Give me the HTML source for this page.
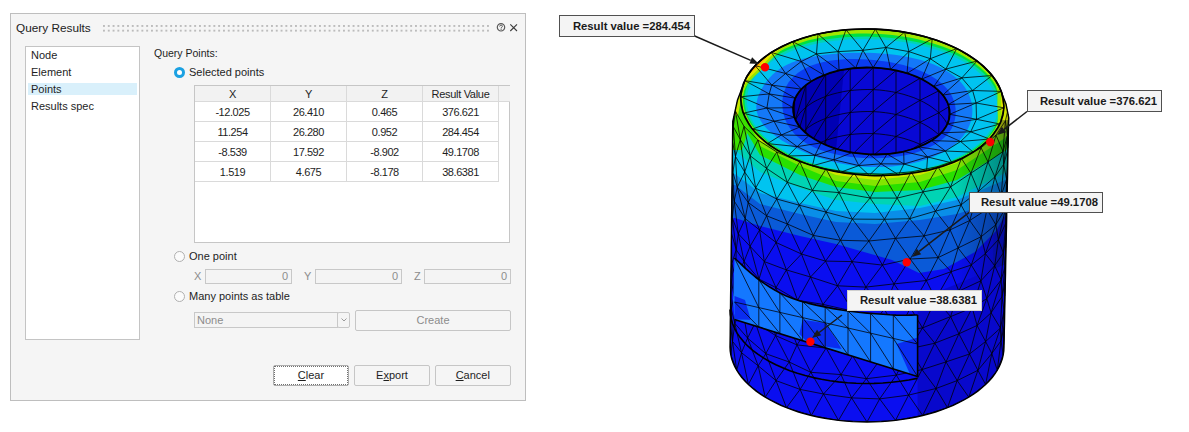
<!DOCTYPE html>
<html><head><meta charset="utf-8">
<style>
*{margin:0;padding:0;box-sizing:border-box}
html,body{width:1189px;height:432px;overflow:hidden;background:#fff;font-family:"Liberation Sans",sans-serif;color:#1e1e1e}
.a{position:absolute}
#dlg{left:10px;top:13px;width:516px;height:388px;background:#f5f5f5;border:1px solid #bebebe}
.t{position:absolute;white-space:nowrap;font-size:11px;line-height:13px}
#title{left:5px;top:7px;font-size:11.8px;line-height:15px;color:#222}
#grip{left:93px;top:11px;width:386px;height:7px;
 background-image:radial-gradient(circle,#8a8a8a 0.9px,transparent 1.1px);background-size:4.83px 4.7px}
#list{left:14px;top:32px;width:115px;height:294px;background:#fff;border:1px solid #c4c4c4}
#sel{left:2px;top:36px;width:109px;height:12px;background:#d9f0fb}
.rad{position:absolute;width:11px;height:11px;border-radius:50%;border:1px solid #b0b0b0;background:#fbfbfb}
.rad.on{border:3.3px solid #1ba1e2;background:#fff}
#tbl{left:183px;top:71px;width:316px;height:158px;background:#fff;border:1px solid #c6c6c6}
.hd{position:absolute;top:0;height:16px;background:#f2f2f2;border-right:1px solid #dadada;border-bottom:1px solid #dadada;text-align:center;font-size:11px;line-height:16px;letter-spacing:-0.3px}
.cell{position:absolute;height:20px;border-right:1px solid #dadada;border-bottom:1px solid #dadada;text-align:center;font-size:11px;line-height:20px;letter-spacing:-0.45px}
.inp{position:absolute;height:15px;border:1px solid #c8c8c8;background:#f4f4f4;color:#8c8c8c;font-size:11px;line-height:13px;text-align:right;padding-right:3px}
.lbl{color:#8c8c8c}
.btn{position:absolute;height:21px;border:1px solid #c6c6c6;border-radius:2px;background:#f5f5f5;text-align:center;font-size:11px;line-height:19px;color:#1e1e1e}
</style></head><body>
<div id="dlg" class="a">
  <div id="title" class="t">Query Results</div>
  <svg class="a" style="left:91.6px;top:11px" width="386" height="8"><defs><pattern id="gp" width="4.8" height="4.7" patternUnits="userSpaceOnUse"><rect x="0.3" y="0.3" width="1.3" height="1.3" fill="#7a7a7a"/></pattern></defs><rect width="386" height="8" fill="url(#gp)"/></svg>
  <svg class="a" style="left:484px;top:9px" width="26" height="12" viewBox="0 0 26 12">
    <circle cx="6" cy="4.3" r="3.7" fill="none" stroke="#5a5a5a" stroke-width="1.2"/>
    <path d="M4.6 3.5 Q4.8 2.1 6.1 2.1 Q7.5 2.2 7.4 3.4 Q7.3 4.2 6.2 4.8 L6.1 5.5" fill="none" stroke="#5a5a5a" stroke-width="1"/>
    <circle cx="6.1" cy="6.6" r="0.6" fill="#5a5a5a"/>
    <path d="M15.3 1.3 L22 8 M22 1.3 L15.3 8" stroke="#3c3c3c" stroke-width="1.1"/>
  </svg>
  <div id="list" class="a">
    <div id="sel" class="a"></div>
    <div class="t" style="left:5px;top:2px">Node</div>
    <div class="t" style="left:5px;top:19px">Element</div>
    <div class="t" style="left:5px;top:36px">Points</div>
    <div class="t" style="left:5px;top:53px">Results spec</div>
  </div>
  <div class="t" style="left:143px;top:33px;font-size:10.5px">Query Points:</div>
  <div class="rad on" style="left:163px;top:53px"></div>
  <div class="t" style="left:178px;top:52px">Selected points</div>
  <div id="tbl" class="a">
    <div class="hd" style="left:0;width:76px">X</div>
    <div class="hd" style="left:76px;width:76px">Y</div>
    <div class="hd" style="left:152px;width:76px">Z</div>
    <div class="hd" style="left:228px;width:76px">Result Value</div>
    <div class="hd" style="left:304px;width:11px;border-right:none"></div>
    <div class="cell" style="top:16px;left:0;width:76px">-12.025</div>
    <div class="cell" style="top:16px;left:76px;width:76px">26.410</div>
    <div class="cell" style="top:16px;left:152px;width:76px">0.465</div>
    <div class="cell" style="top:16px;left:228px;width:76px">376.621</div>
    <div class="cell" style="top:36px;left:0;width:76px">11.254</div>
    <div class="cell" style="top:36px;left:76px;width:76px">26.280</div>
    <div class="cell" style="top:36px;left:152px;width:76px">0.952</div>
    <div class="cell" style="top:36px;left:228px;width:76px">284.454</div>
    <div class="cell" style="top:56px;left:0;width:76px">-8.539</div>
    <div class="cell" style="top:56px;left:76px;width:76px">17.592</div>
    <div class="cell" style="top:56px;left:152px;width:76px">-8.902</div>
    <div class="cell" style="top:56px;left:228px;width:76px">49.1708</div>
    <div class="cell" style="top:76px;left:0;width:76px">1.519</div>
    <div class="cell" style="top:76px;left:76px;width:76px">4.675</div>
    <div class="cell" style="top:76px;left:152px;width:76px">-8.178</div>
    <div class="cell" style="top:76px;left:228px;width:76px">38.6381</div>
  </div>
  <div class="rad" style="left:163px;top:237px"></div>
  <div class="t" style="left:178px;top:236px">One point</div>
  <div class="t lbl" style="left:183px;top:256px">X</div>
  <div class="inp" style="left:194px;top:255px;width:87px">0</div>
  <div class="t lbl" style="left:293px;top:256px">Y</div>
  <div class="inp" style="left:304px;top:255px;width:87px">0</div>
  <div class="t lbl" style="left:403px;top:256px">Z</div>
  <div class="inp" style="left:413px;top:255px;width:87px">0</div>
  <div class="rad" style="left:163px;top:277px"></div>
  <div class="t" style="left:178px;top:276px">Many points as table</div>
  <div class="inp" style="left:183px;top:298px;width:144px;height:16px;text-align:left;padding-left:2px;line-height:14px">None</div>
  <div class="a" style="left:326px;top:298px;width:13px;height:16px;border:1px solid #c8c8c8;border-radius:2px;background:#f4f4f4"></div>
  <svg class="a" style="left:329px;top:303px" width="8" height="6"><path d="M1.5 1.5 L4 4 L6.5 1.5" fill="none" stroke="#9a9a9a" stroke-width="1"/></svg>
  <div class="btn" style="left:344px;top:296px;width:156px;color:#8c8c8c">Create</div>
  <div class="btn" style="left:262px;top:351px;width:76px;border:1px solid #adadad;background:#fff"><div style="position:absolute;left:0;top:0;right:0;bottom:0;border:1px dotted #707070"></div><u>C</u>lear</div>
  <div class="btn" style="left:343px;top:351px;width:76px">E<u>x</u>port</div>
  <div class="btn" style="left:423.5px;top:351px;width:76.5px"><u>C</u>ancel</div>
</div>
<!--FEA--><svg class="a" style="left:0;top:0" width="1189" height="432" viewBox="0 0 1189 432"><defs><clipPath id="bc"><polygon points="746.0,78.0 737.5,100.0 732.8,121.3 732.6,133.8 732.5,146.4 732.3,158.9 732.1,171.4 732.0,184.0 731.8,196.5 731.7,209.1 731.5,221.6 731.4,234.1 731.2,246.7 731.1,259.2 730.9,271.8 730.8,284.3 730.6,296.8 730.5,309.4 730.3,321.9 730.2,334.5 730.0,347.0 730.0,347.0 730.2,350.9 730.8,354.8 731.7,358.7 733.0,362.6 734.7,366.4 736.7,370.2 739.1,373.9 741.8,377.5 744.9,381.0 748.4,384.5 752.1,387.8 756.2,391.1 760.5,394.2 765.2,397.2 770.1,400.0 775.3,402.7 780.8,405.3 786.5,407.7 792.4,409.9 798.5,412.0 804.8,413.8 811.3,415.5 817.9,417.0 824.7,418.3 831.5,419.4 838.5,420.4 845.6,421.1 852.7,421.6 859.8,421.9 867.0,422.0 874.2,421.9 881.3,421.6 888.4,421.1 895.5,420.4 902.5,419.4 909.3,418.3 916.1,417.0 922.7,415.5 929.2,413.8 935.5,412.0 941.6,409.9 947.5,407.7 953.2,405.3 958.7,402.7 963.9,400.0 968.8,397.2 973.5,394.2 977.8,391.1 981.9,387.8 985.6,384.5 989.1,381.0 992.2,377.5 994.9,373.9 997.3,370.2 999.3,366.4 1001.0,362.6 1002.3,358.7 1003.2,354.8 1003.8,350.9 1004.0,347.0 1004.0,347.0 1004.2,334.9 1004.5,322.9 1004.7,310.8 1005.0,298.8 1005.2,286.7 1005.5,274.6 1005.7,262.6 1006.0,250.5 1006.2,238.5 1006.5,226.4 1006.7,214.3 1007.0,202.3 1007.2,190.2 1007.5,178.2 1007.7,166.1 1007.9,154.0 1008.2,142.0 1008.4,129.9 1008.8,118.0 1006.0,104.0 1002.4,95.0 1001.4,91.7 1000.1,88.5 998.6,85.3 996.8,82.1 994.7,78.9 992.4,75.8 989.8,72.7 987.0,69.7 984.0,66.8 980.8,64.0 977.3,61.2 973.6,58.5 969.7,55.9 965.6,53.4 961.4,50.9 956.9,48.6 952.3,46.4 947.5,44.4 942.5,42.4 937.4,40.5 932.2,38.8 926.9,37.2 921.4,35.8 915.9,34.4 910.2,33.3 904.5,32.2 898.7,31.3 892.9,30.6 887.0,29.9 881.1,29.5 875.2,29.2 869.2,29.0 863.3,29.0 857.4,29.1 851.5,29.4 845.7,29.8 839.9,30.4 834.2,31.1 828.5,32.0 823.0,33.0 817.5,34.1 812.2,35.4 807.0,36.8 801.9,38.4 797.0,40.1 792.2,41.9 787.6,43.8 783.1,45.9 778.8,48.0 774.7,50.3 770.9,52.7 767.2,55.2 763.7,57.8 760.5,60.4 757.5,63.2 754.7,66.0 752.1,68.9 749.8,71.9 747.8,74.9 746.0,78.0"/></clipPath><clipPath id="hc"><ellipse cx="871.4" cy="111" rx="78.4" ry="43.4" transform="rotate(2.4 871.4 111)"/></clipPath></defs><polygon points="746.0,78.0 737.5,100.0 732.8,121.3 732.6,133.8 732.5,146.4 732.3,158.9 732.1,171.4 732.0,184.0 731.8,196.5 731.7,209.1 731.5,221.6 731.4,234.1 731.2,246.7 731.1,259.2 730.9,271.8 730.8,284.3 730.6,296.8 730.5,309.4 730.3,321.9 730.2,334.5 730.0,347.0 730.0,347.0 730.2,350.9 730.8,354.8 731.7,358.7 733.0,362.6 734.7,366.4 736.7,370.2 739.1,373.9 741.8,377.5 744.9,381.0 748.4,384.5 752.1,387.8 756.2,391.1 760.5,394.2 765.2,397.2 770.1,400.0 775.3,402.7 780.8,405.3 786.5,407.7 792.4,409.9 798.5,412.0 804.8,413.8 811.3,415.5 817.9,417.0 824.7,418.3 831.5,419.4 838.5,420.4 845.6,421.1 852.7,421.6 859.8,421.9 867.0,422.0 874.2,421.9 881.3,421.6 888.4,421.1 895.5,420.4 902.5,419.4 909.3,418.3 916.1,417.0 922.7,415.5 929.2,413.8 935.5,412.0 941.6,409.9 947.5,407.7 953.2,405.3 958.7,402.7 963.9,400.0 968.8,397.2 973.5,394.2 977.8,391.1 981.9,387.8 985.6,384.5 989.1,381.0 992.2,377.5 994.9,373.9 997.3,370.2 999.3,366.4 1001.0,362.6 1002.3,358.7 1003.2,354.8 1003.8,350.9 1004.0,347.0 1004.0,347.0 1004.2,334.9 1004.5,322.9 1004.7,310.8 1005.0,298.8 1005.2,286.7 1005.5,274.6 1005.7,262.6 1006.0,250.5 1006.2,238.5 1006.5,226.4 1006.7,214.3 1007.0,202.3 1007.2,190.2 1007.5,178.2 1007.7,166.1 1007.9,154.0 1008.2,142.0 1008.4,129.9 1008.8,118.0 1006.0,104.0 1002.4,95.0 1001.4,91.7 1000.1,88.5 998.6,85.3 996.8,82.1 994.7,78.9 992.4,75.8 989.8,72.7 987.0,69.7 984.0,66.8 980.8,64.0 977.3,61.2 973.6,58.5 969.7,55.9 965.6,53.4 961.4,50.9 956.9,48.6 952.3,46.4 947.5,44.4 942.5,42.4 937.4,40.5 932.2,38.8 926.9,37.2 921.4,35.8 915.9,34.4 910.2,33.3 904.5,32.2 898.7,31.3 892.9,30.6 887.0,29.9 881.1,29.5 875.2,29.2 869.2,29.0 863.3,29.0 857.4,29.1 851.5,29.4 845.7,29.8 839.9,30.4 834.2,31.1 828.5,32.0 823.0,33.0 817.5,34.1 812.2,35.4 807.0,36.8 801.9,38.4 797.0,40.1 792.2,41.9 787.6,43.8 783.1,45.9 778.8,48.0 774.7,50.3 770.9,52.7 767.2,55.2 763.7,57.8 760.5,60.4 757.5,63.2 754.7,66.0 752.1,68.9 749.8,71.9 747.8,74.9 746.0,78.0" fill="#0a0ef0"/><g clip-path="url(#bc)"><polygon points="995.0,150.0 1040.0,150.0 1040.0,432.0 990.0,432.0" fill="#0812d8" /><polygon points="700.0,0.0 700.0,218.0 735.0,218.0 760.0,226.0 800.0,236.0 836.0,244.0 850.0,248.0 892.0,260.0 919.0,273.0 944.0,269.0 975.0,252.0 996.0,231.0 1004.0,217.0 1010.0,212.0 1040.0,212.0 1040.0,0.0" fill="#0a5ad8"/><polygon points="700.0,0.0 700.0,185.0 735.0,185.0 760.0,204.0 800.0,214.0 836.0,222.0 875.0,224.0 920.0,220.0 957.0,214.0 1005.0,199.0 1010.0,196.0 1040.0,196.0 1040.0,0.0" fill="#0a8ee8"/><polygon points="700.0,0.0 700.0,174.0 735.0,174.0 760.0,193.0 800.0,203.0 836.0,211.0 875.0,213.0 920.0,208.0 957.0,200.0 1005.0,180.0 1010.0,176.0 1040.0,176.0 1040.0,0.0" fill="#00c4f0"/><polygon points="700.0,0.0 700.0,150.0 735.0,150.0 760.0,172.0 800.0,188.0 836.0,200.0 875.0,204.0 920.0,206.0 957.0,197.0 1005.0,173.0 1010.0,168.0 1040.0,168.0 1040.0,0.0" fill="#00d4b4"/><polygon points="700.0,0.0 700.0,112.0 735.0,112.0 760.0,155.0 800.0,175.0 836.0,187.0 875.0,192.0 920.0,190.0 957.0,180.0 1005.0,151.0 1010.0,146.0 1040.0,146.0 1040.0,0.0" fill="#28e000"/><polygon points="700.0,0.0 700.0,96.0 735.0,96.0 760.0,146.0 800.0,166.0 836.0,181.0 875.0,186.0 920.0,182.0 957.0,170.0 1005.0,138.0 1010.0,132.0 1040.0,132.0 1040.0,0.0" fill="#82e600"/><polygon points="700.0,0.0 700.0,80.0 735.0,80.0 760.0,141.0 800.0,160.0 836.0,175.0 875.0,180.0 920.0,175.0 957.0,163.0 1005.0,128.0 1010.0,120.0 1040.0,120.0 1040.0,0.0" fill="#d2e600"/><defs><linearGradient id="rs" x1="0" x2="1" y1="0" y2="0"><stop offset="0" stop-color="#000028" stop-opacity="0"/><stop offset="1" stop-color="#000028" stop-opacity="0.4"/></linearGradient></defs><rect x="955" y="120" width="56" height="320" fill="url(#rs)"/><polygon points="725.0,85.0 748.0,80.0 744.0,108.0 750.0,125.0 742.0,150.0 725.0,150.0" fill="#3ce000" /><polygon points="725.0,85.0 748.0,80.0 741.0,100.0 738.0,115.0 725.0,118.0" fill="#c8e600" /><polygon points="917.6,300.0 1040.0,250.0 1040.0,432.0 917.6,432.0" fill="#0808cc" /><polygon points="734.5,258.0 737.2,260.5 741.0,264.1 745.4,268.3 750.3,272.7 755.4,277.0 760.4,280.8 765.2,284.1 770.1,287.3 775.2,290.4 780.6,293.3 786.4,296.1 792.8,298.6 800.0,300.9 807.8,303.1 816.1,305.1 824.7,306.9 833.2,308.6 841.5,310.0 849.8,311.2 858.5,312.3 867.1,313.1 875.4,313.8 883.1,314.3 890.0,314.8 896.1,315.1 901.8,315.2 906.8,315.2 911.2,315.1 914.8,315.0 917.6,315.0 917.6,376.5 734.5,319.5 733.0,300.0" fill="#1478ff" /><polygon points="802.6,319.7 825.0,323.0 835.0,337.5 841.5,349.0 809.0,344.0 799.3,334.0" fill="#0a2cf0" /><polygon points="896.6,344.0 917.6,337.5 917.6,376.0 909.5,373.0" fill="#0a2cf0" /><polygon points="734.5,296.0 745.0,300.0 750.7,319.7 734.5,319.5" fill="#0a2cf0" /></g><ellipse cx="872.3" cy="102.3" rx="131.7" ry="73.2" fill="#a0e600" transform="rotate(2.4 872.3 102.3)"/><polygon points="869.2,174.6 878.3,174.8 887.3,174.6 896.2,174.1 905.0,173.3 913.7,172.1 922.2,170.6 930.4,168.7 938.3,166.5 945.9,164.0 953.2,161.2 960.0,158.2 966.4,154.8 972.4,151.2 977.9,147.4 982.9,143.3 987.3,139.1 991.1,134.6 994.4,130.0 997.1,125.3 999.2,120.5 1000.6,115.6 1001.4,110.6 1001.5,105.6 1001.1,100.6 999.9,95.6 998.2,90.6 995.8,85.7 992.8,81.0 989.2,76.3 985.0,71.8 980.2,67.5 974.9,63.3 969.2,59.4 962.9,55.7 956.3,52.3 949.2,49.1 941.8,46.3 934.1,43.7 926.2,41.4 918.0,39.3 909.6,37.6 901.1,36.2 892.5,35.1 883.8,34.3 875.1,33.8 866.4,33.6 857.6,33.6 849.0,34.0 840.4,34.7 831.9,35.7 823.6,37.1 815.5,38.7 807.6,40.6 800.0,42.9 792.7,45.4 785.8,48.3 779.3,51.4 773.2,54.9 767.6,58.5 762.5,62.5 758.0,66.6 754.0,70.9 750.6,75.5 747.8,80.1 745.6,84.9 744.1,89.8 743.2,94.8 742.9,99.8 743.3,104.8 744.3,109.8 746.0,114.8 748.3,119.7 751.1,124.6 754.6,129.3 758.7,133.9 763.3,138.4 768.4,142.7 774.0,146.8 780.2,150.6 786.7,154.3 793.7,157.7 801.1,160.8 808.8,163.6 816.9,166.2 825.2,168.4 833.7,170.3 842.4,171.9 851.3,173.1 860.2,174.0" fill="#00e040" /><polygon points="869.3,174.0 878.2,174.2 887.1,174.0 895.9,173.5 904.6,172.7 913.2,171.5 921.5,170.0 929.6,168.2 937.5,166.0 945.0,163.5 952.1,160.8 958.9,157.7 965.3,154.4 971.1,150.9 976.6,147.1 981.5,143.1 985.8,138.9 989.6,134.5 992.9,130.0 995.5,125.3 997.5,120.5 998.9,115.7 999.7,110.8 999.8,105.8 999.3,100.9 998.1,96.0 996.3,91.1 993.9,86.3 990.9,81.6 987.2,77.1 983.0,72.7 978.2,68.5 972.9,64.5 967.1,60.7 960.9,57.2 954.2,54.0 947.2,51.0 939.9,48.3 932.3,45.9 924.5,43.8 916.5,42.0 908.4,40.4 900.1,39.1 891.8,38.1 883.4,37.3 874.9,36.9 866.5,36.6 858.1,36.7 849.7,37.0 841.3,37.6 833.1,38.5 825.0,39.6 817.0,41.1 809.3,42.8 801.8,44.9 794.6,47.3 787.7,50.0 781.2,53.0 775.1,56.2 769.5,59.7 764.4,63.5 759.8,67.5 755.8,71.8 752.4,76.2 749.5,80.8 747.4,85.5 745.8,90.3 744.9,95.1 744.6,100.1 744.9,105.0 745.9,110.0 747.5,114.9 749.8,119.8 752.6,124.6 756.0,129.2 760.0,133.8 764.6,138.2 769.7,142.4 775.2,146.5 781.3,150.3 787.8,153.9 794.7,157.2 802.0,160.3 809.6,163.1 817.5,165.6 825.7,167.8 834.1,169.7 842.7,171.3 851.5,172.5 860.3,173.4" fill="#00d4b4" /><polygon points="869.3,173.1 878.1,173.3 886.8,173.2 895.5,172.7 904.0,171.9 912.5,170.7 920.7,169.2 928.6,167.4 936.3,165.3 943.7,162.9 950.8,160.2 957.4,157.2 963.7,153.9 969.4,150.4 974.8,146.7 979.6,142.7 983.8,138.6 987.6,134.3 990.7,129.8 993.3,125.3 995.2,120.6 996.5,115.8 997.3,111.0 997.3,106.2 996.8,101.3 995.6,96.5 993.7,91.8 991.3,87.1 988.2,82.6 984.6,78.1 980.4,73.9 975.6,69.8 970.4,65.9 964.7,62.3 958.6,58.9 952.1,55.8 945.2,52.9 938.1,50.3 930.7,48.0 923.1,45.9 915.3,44.1 907.4,42.6 899.3,41.4 891.2,40.4 883.0,39.6 874.8,39.2 866.6,39.0 858.4,39.0 850.2,39.3 842.1,39.9 834.1,40.7 826.2,41.9 818.4,43.3 810.9,45.0 803.5,47.0 796.5,49.3 789.8,51.8 783.4,54.7 777.4,57.9 771.9,61.3 766.8,64.9 762.3,68.8 758.3,72.9 754.9,77.2 752.0,81.6 749.8,86.2 748.2,90.9 747.3,95.7 746.9,100.5 747.2,105.4 748.2,110.2 749.7,115.1 751.9,119.8 754.6,124.5 758.0,129.1 761.9,133.6 766.4,137.9 771.4,142.1 776.8,146.1 782.8,149.8 789.2,153.4 795.9,156.7 803.1,159.7 810.6,162.5 818.4,164.9 826.4,167.1 834.7,169.0 843.2,170.5 851.8,171.7 860.5,172.6" fill="#00c4f0" /><polygon points="869.4,167.0 877.1,167.1 884.7,167.0 892.3,166.4 899.7,165.6 906.8,164.4 913.8,163.0 920.5,161.3 926.8,159.3 932.8,157.0 938.4,154.5 943.6,151.9 948.4,149.0 952.8,145.9 956.7,142.7 960.2,139.4 963.2,135.9 965.8,132.3 967.9,128.7 969.6,125.0 970.9,121.2 971.8,117.4 972.3,113.5 972.4,109.6 972.1,105.7 971.4,101.8 970.2,97.9 968.7,94.0 966.6,90.1 964.1,86.3 961.1,82.6 957.6,79.1 953.6,75.7 949.1,72.5 944.2,69.5 938.9,66.8 933.2,64.3 927.2,62.1 921.0,60.1 914.6,58.4 908.0,57.0 901.3,55.8 894.6,54.8 887.8,54.0 880.9,53.4 874.0,53.0 867.1,52.8 860.3,52.7 853.4,52.8 846.5,53.0 839.6,53.4 832.6,54.0 825.7,54.7 818.9,55.7 812.0,56.8 805.3,58.3 798.9,60.1 792.7,62.2 787.0,64.7 781.8,67.6 777.1,70.8 773.0,74.3 769.4,78.0 766.3,81.8 763.5,85.8 761.2,89.8 759.2,93.9 757.6,98.1 756.6,102.4 756.3,106.7 756.7,111.2 758.0,115.7 760.2,120.1 763.1,124.5 766.9,128.7 771.3,132.7 776.2,136.6 781.5,140.2 787.2,143.6 793.0,146.8 799.1,149.7 805.3,152.5 811.7,155.1 818.2,157.4 825.0,159.6 832.0,161.5 839.2,163.2 846.6,164.6 854.1,165.7 861.7,166.5" fill="#1478f8" /><polygon points="869.5,158.3 875.7,158.3 881.8,158.1 887.8,157.7 893.7,157.1 899.6,156.3 905.3,155.3 910.8,154.0 916.1,152.5 921.2,150.8 926.0,148.9 930.6,146.8 934.8,144.5 938.7,142.1 942.1,139.5 945.2,136.7 947.8,133.9 950.1,130.9 951.9,127.9 953.3,124.8 954.4,121.6 955.1,118.4 955.6,115.2 955.7,111.9 955.6,108.7 955.1,105.3 954.3,102.0 953.1,98.7 951.6,95.4 949.6,92.1 947.2,89.0 944.4,85.9 941.1,82.9 937.5,80.1 933.5,77.4 929.2,74.9 924.5,72.6 919.6,70.4 914.4,68.4 909.0,66.7 903.4,65.1 897.7,63.7 891.8,62.5 885.9,61.5 879.8,60.7 873.6,60.0 867.4,59.5 861.1,59.2 854.8,59.0 848.5,59.1 842.1,59.4 835.8,59.9 829.6,60.8 823.5,61.9 817.7,63.4 812.2,65.2 807.0,67.4 802.3,69.9 798.1,72.7 794.5,75.7 791.3,78.9 788.7,82.3 786.6,85.8 785.0,89.4 783.7,93.0 782.9,96.6 782.4,100.2 782.3,103.7 782.5,107.2 782.9,110.7 783.6,114.2 784.6,117.6 785.9,120.9 787.5,124.3 789.5,127.6 791.9,130.8 794.6,134.0 797.9,137.1 801.6,140.1 805.8,142.9 810.4,145.5 815.5,147.9 820.9,150.1 826.6,152.0 832.5,153.6 838.6,155.0 844.7,156.1 850.9,157.0 857.1,157.6 863.3,158.1" fill="#0a3cf0" /><polygon points="799.3,39.2 795.4,40.6 791.6,42.1 787.9,43.6 784.3,45.3 780.9,47.0 777.5,48.7 774.3,50.6 771.2,52.5 768.2,54.5 765.3,56.5 762.6,58.6 760.1,60.8 757.7,63.0 755.4,65.2 753.3,67.6 751.4,69.9 749.6,72.3 747.9,74.7 746.4,77.2 745.1,79.7 744.0,82.3 743.0,84.8 742.2,87.4 741.6,90.0 741.1,92.6 740.8,95.2 740.7,97.9 740.7,100.5 740.9,103.2 742.6,103.4 742.5,100.8 742.6,98.3 742.8,95.7 743.4,93.2 744.1,90.7 745.2,88.2 746.4,85.9 747.9,83.6 749.7,81.3 751.6,79.2 753.7,77.0 755.8,75.0 758.0,72.9 760.2,70.9 762.4,68.8 764.5,66.7 766.6,64.5 768.6,62.3 770.7,60.0 772.9,57.7 775.2,55.5 777.7,53.2 780.4,51.1 783.2,49.0 786.3,47.1 789.5,45.2 793.0,43.5 796.6,41.9 800.4,40.5" fill="#96e600" /><polygon points="786.5,44.3 784.0,45.4 781.5,46.7 779.0,47.9 776.7,49.2 774.4,50.5 772.1,51.9 769.9,53.3 767.8,54.7 765.8,56.2 763.8,57.7 761.9,59.2 760.1,60.7 758.4,62.3 756.7,63.9 755.1,65.5 753.6,67.2 752.2,68.9 750.8,70.6 749.6,72.3 748.4,74.0 747.3,75.8 746.2,77.6 745.3,79.4 744.5,81.2 743.7,83.0 743.0,84.9 742.4,86.7 741.9,88.6 741.5,90.4 742.7,90.7 743.2,88.9 743.8,87.1 744.5,85.3 745.4,83.6 746.4,81.9 747.5,80.2 748.8,78.5 750.2,77.0 751.7,75.4 753.3,73.9 754.9,72.4 756.5,70.9 758.1,69.4 759.7,67.9 761.3,66.4 762.8,64.8 764.3,63.2 765.8,61.5 767.3,59.9 768.9,58.2 770.5,56.5 772.2,54.9 774.1,53.3 776.0,51.8 778.1,50.3 780.2,48.9 782.5,47.5 784.9,46.3 787.3,45.0" fill="#e6e600" /><polygon points="773.5,51.1 772.0,52.0 770.6,52.9 769.2,53.8 767.8,54.7 766.5,55.7 765.2,56.6 763.9,57.6 762.7,58.6 761.5,59.6 760.3,60.6 759.1,61.6 758.0,62.6 756.9,63.7 755.9,64.8 754.9,65.8 753.9,66.9 752.9,68.0 752.0,69.1 751.1,70.2 750.3,71.3 749.5,72.4 748.7,73.6 747.9,74.7 747.2,75.8 746.6,77.0 745.9,78.2 745.3,79.3 744.8,80.5 744.2,81.7 744.3,81.7 744.9,80.6 745.5,79.4 746.2,78.3 746.9,77.1 747.7,76.0 748.6,75.0 749.5,73.9 750.5,72.9 751.6,71.9 752.7,70.9 753.8,69.9 754.9,68.9 756.0,67.9 757.1,67.0 758.2,65.9 759.2,64.9 760.2,63.9 761.2,62.8 762.2,61.7 763.1,60.6 764.1,59.4 765.1,58.3 766.1,57.2 767.2,56.2 768.4,55.1 769.6,54.1 770.9,53.1 772.2,52.1 773.6,51.2" fill="#ff9600" /><polygon points="994.9,132.5 996.2,130.7 997.3,128.8 998.4,127.0 999.4,125.1 1000.2,123.2 1001.0,121.3 1001.7,119.4 1002.3,117.4 1002.8,115.5 1003.2,113.5 1003.6,111.5 1003.8,109.6 1003.9,107.6 1003.9,105.6 1003.8,103.6 1003.7,101.6 1003.4,99.7 1003.0,97.7 1002.6,95.7 1002.0,93.7 1001.4,91.7 1000.6,89.8 999.8,87.8 998.9,85.9 997.9,84.0 996.7,82.0 995.5,80.1 994.2,78.3 992.9,76.4 991.5,76.9 992.8,78.8 993.8,80.7 994.8,82.7 995.6,84.7 996.2,86.7 996.7,88.7 997.1,90.7 997.3,92.7 997.4,94.8 997.5,96.8 997.5,98.8 997.4,100.7 997.4,102.7 997.4,104.6 997.4,106.5 997.5,108.4 997.6,110.2 997.7,112.1 997.8,113.9 997.9,115.8 997.9,117.6 997.8,119.5 997.6,121.3 997.3,123.2 996.8,125.1 996.2,126.9 995.5,128.8 994.5,130.6 993.5,132.4" fill="#96e600" /><polygon points="1000.4,122.9 1000.9,121.7 1001.3,120.5 1001.7,119.3 1002.1,118.1 1002.5,116.9 1002.8,115.7 1003.1,114.5 1003.3,113.3 1003.5,112.0 1003.6,110.8 1003.8,109.6 1003.9,108.3 1003.9,107.1 1003.9,105.9 1003.9,104.6 1003.8,103.4 1003.7,102.2 1003.6,100.9 1003.4,99.7 1003.2,98.5 1003.0,97.2 1002.7,96.0 1002.3,94.8 1002.0,93.5 1001.6,92.3 1001.2,91.1 1000.7,89.9 1000.2,88.7 999.6,87.4 999.3,87.5 999.7,88.8 1000.1,90.0 1000.4,91.3 1000.6,92.5 1000.8,93.8 1001.0,95.1 1001.1,96.3 1001.1,97.6 1001.2,98.9 1001.2,100.1 1001.2,101.3 1001.2,102.6 1001.2,103.8 1001.2,105.0 1001.2,106.2 1001.3,107.4 1001.3,108.6 1001.4,109.8 1001.4,111.0 1001.5,112.2 1001.5,113.4 1001.5,114.6 1001.4,115.8 1001.3,117.0 1001.2,118.2 1001.0,119.3 1000.7,120.5 1000.4,121.7 1000.0,122.9" fill="#e6e600" /><ellipse cx="871.4" cy="111" rx="78.4" ry="43.4" fill="#0808d4" transform="rotate(2.4 871.4 111)"/><g clip-path="url(#hc)"><polygon points="790,60 845,60 835,160 790,160" fill="#0000b4"/></g><defs><clipPath id="bc2"><path clip-rule="evenodd" d="M746.0 78.0 L737.5 100.0 L732.8 121.3 L732.6 133.8 L732.5 146.4 L732.3 158.9 L732.1 171.4 L732.0 184.0 L731.8 196.5 L731.7 209.1 L731.5 221.6 L731.4 234.1 L731.2 246.7 L731.1 259.2 L730.9 271.8 L730.8 284.3 L730.6 296.8 L730.5 309.4 L730.3 321.9 L730.2 334.5 L730.0 347.0 L730.0 347.0 L730.2 350.9 L730.8 354.8 L731.7 358.7 L733.0 362.6 L734.7 366.4 L736.7 370.2 L739.1 373.9 L741.8 377.5 L744.9 381.0 L748.4 384.5 L752.1 387.8 L756.2 391.1 L760.5 394.2 L765.2 397.2 L770.1 400.0 L775.3 402.7 L780.8 405.3 L786.5 407.7 L792.4 409.9 L798.5 412.0 L804.8 413.8 L811.3 415.5 L817.9 417.0 L824.7 418.3 L831.5 419.4 L838.5 420.4 L845.6 421.1 L852.7 421.6 L859.8 421.9 L867.0 422.0 L874.2 421.9 L881.3 421.6 L888.4 421.1 L895.5 420.4 L902.5 419.4 L909.3 418.3 L916.1 417.0 L922.7 415.5 L929.2 413.8 L935.5 412.0 L941.6 409.9 L947.5 407.7 L953.2 405.3 L958.7 402.7 L963.9 400.0 L968.8 397.2 L973.5 394.2 L977.8 391.1 L981.9 387.8 L985.6 384.5 L989.1 381.0 L992.2 377.5 L994.9 373.9 L997.3 370.2 L999.3 366.4 L1001.0 362.6 L1002.3 358.7 L1003.2 354.8 L1003.8 350.9 L1004.0 347.0 L1004.0 347.0 L1004.2 334.9 L1004.5 322.9 L1004.7 310.8 L1005.0 298.8 L1005.2 286.7 L1005.5 274.6 L1005.7 262.6 L1006.0 250.5 L1006.2 238.5 L1006.5 226.4 L1006.7 214.3 L1007.0 202.3 L1007.2 190.2 L1007.5 178.2 L1007.7 166.1 L1007.9 154.0 L1008.2 142.0 L1008.4 129.9 L1008.8 118.0 L1006.0 104.0 L1002.4 95.0 L1001.4 91.7 L1000.1 88.5 L998.6 85.3 L996.8 82.1 L994.7 78.9 L992.4 75.8 L989.8 72.7 L987.0 69.7 L984.0 66.8 L980.8 64.0 L977.3 61.2 L973.6 58.5 L969.7 55.9 L965.6 53.4 L961.4 50.9 L956.9 48.6 L952.3 46.4 L947.5 44.4 L942.5 42.4 L937.4 40.5 L932.2 38.8 L926.9 37.2 L921.4 35.8 L915.9 34.4 L910.2 33.3 L904.5 32.2 L898.7 31.3 L892.9 30.6 L887.0 29.9 L881.1 29.5 L875.2 29.2 L869.2 29.0 L863.3 29.0 L857.4 29.1 L851.5 29.4 L845.7 29.8 L839.9 30.4 L834.2 31.1 L828.5 32.0 L823.0 33.0 L817.5 34.1 L812.2 35.4 L807.0 36.8 L801.9 38.4 L797.0 40.1 L792.2 41.9 L787.6 43.8 L783.1 45.9 L778.8 48.0 L774.7 50.3 L770.9 52.7 L767.2 55.2 L763.7 57.8 L760.5 60.4 L757.5 63.2 L754.7 66.0 L752.1 68.9 L749.8 71.9 L747.8 74.9 L746.0 78.0 Z M734.5 258.0 L737.2 260.5 L741.0 264.1 L745.4 268.3 L750.3 272.7 L755.4 277.0 L760.4 280.8 L765.2 284.1 L770.1 287.3 L775.2 290.4 L780.6 293.3 L786.4 296.1 L792.8 298.6 L800.0 300.9 L807.8 303.1 L816.1 305.1 L824.7 306.9 L833.2 308.6 L841.5 310.0 L849.8 311.2 L858.5 312.3 L867.1 313.1 L875.4 313.8 L883.1 314.3 L890.0 314.8 L896.1 315.1 L901.8 315.2 L906.8 315.2 L911.2 315.1 L914.8 315.0 L917.6 315.0 L917.6 376.5 L734.5 319.5 L733.0 300.0 Z"/></clipPath></defs><path clip-path="url(#bc2)" fill="none" stroke="#000" stroke-width="0.85" stroke-opacity="0.9" d="M733.1 96.2L733.1 96.2M733.1 96.2L735.6 111.5M735.6 111.5L744.0 126.3M744.0 126.3L757.9 140.0M757.9 140.0L776.8 152.0M776.8 152.0L799.8 161.8M799.8 161.8L826.0 168.9M826.0 168.9L854.1 173.1M854.1 173.1L882.9 174.1M882.9 174.1L911.2 171.9M911.2 171.9L937.8 166.6M937.8 166.6L961.4 158.4M961.4 158.4L981.1 147.8M981.1 147.8L996.0 135.1M996.0 135.1L1005.4 120.9M1005.4 120.9L1008.9 105.8M1008.9 105.8L1008.9 105.8M1008.9 105.8L1008.9 105.8M732.8 119.0L733.3 126.7M733.3 126.7L740.3 139.6M740.3 139.6L750.2 155.8M750.2 155.8L766.6 168.4M766.6 168.4L787.3 182.3M787.3 182.3L812.4 190.4M812.4 190.4L838.9 192.6M838.9 192.6L870.1 198.0M870.1 198.0L897.1 198.1M897.1 198.1L923.0 191.9M923.0 191.9L950.6 186.9M950.6 186.9L970.9 173.2M970.9 173.2L988.0 161.9M988.0 161.9L1003.0 151.5M1003.0 151.5L1007.5 135.4M1007.5 135.4L1008.5 127.7M1008.5 127.7L1008.5 127.7M1008.5 127.7L1008.5 127.7M732.5 141.8L732.5 141.8M732.5 141.8L735.5 156.4M735.5 156.4L744.7 172.0M744.7 172.0L755.7 188.0M755.7 188.0L776.7 199.0M776.7 199.0L799.3 205.2M799.3 205.2L826.0 212.1M826.0 212.1L852.3 219.1M852.3 219.1L884.5 219.3M884.5 219.3L909.7 218.7M909.7 218.7L935.5 211.1M935.5 211.1L961.0 204.9M961.0 204.9L978.5 191.3M978.5 191.3L994.9 176.9M994.9 176.9L1003.7 164.3M1003.7 164.3L1008.0 149.7M1008.0 149.7L1008.0 149.7M1008.0 149.7L1008.0 149.7M732.2 164.6L732.8 172.3M732.8 172.3L737.3 187.2M737.3 187.2L748.2 202.5M748.2 202.5L766.6 215.8M766.6 215.8L787.4 224.0M787.4 224.0L813.3 235.4M813.3 235.4L840.5 240.3M840.5 240.3L868.9 241.0M868.9 241.0L895.5 238.4M895.5 238.4L924.0 235.9M924.0 235.9L950.1 229.9M950.1 229.9L969.7 220.5M969.7 220.5L987.0 209.4M987.0 209.4L1001.2 195.7M1001.2 195.7L1006.6 179.3M1006.6 179.3L1007.6 171.6M1007.6 171.6L1007.6 171.6M1007.6 171.6L1007.6 171.6M731.9 187.4L731.9 187.4M731.9 187.4L734.2 201.0M734.2 201.0L745.2 218.6M745.2 218.6L759.6 230.0M759.6 230.0L776.1 242.5M776.1 242.5L801.5 254.0M801.5 254.0L825.5 261.1M825.5 261.1L852.0 261.6M852.0 261.6L882.4 265.1M882.4 265.1L910.2 259.0M910.2 259.0L938.1 257.6M938.1 257.6L958.1 248.0M958.1 248.0L981.2 236.7M981.2 236.7L995.8 224.8M995.8 224.8L1005.6 208.2M1005.6 208.2L1007.1 193.5M1007.1 193.5L1007.1 193.5M1007.1 193.5L1007.1 193.5M731.7 210.2L732.3 217.9M732.3 217.9L738.3 233.8M738.3 233.8L750.1 246.3M750.1 246.3L764.3 261.6M764.3 261.6L786.4 269.9M786.4 269.9L810.5 277.0M810.5 277.0L837.6 285.8M837.6 285.8L865.9 287.1M865.9 287.1L894.0 283.9M894.0 283.9L926.3 280.5M926.3 280.5L951.1 271.7M951.1 271.7L971.3 265.0M971.3 265.0L985.4 253.6M985.4 253.6L998.4 239.6M998.4 239.6L1005.8 223.1M1005.8 223.1L1006.7 215.4M1006.7 215.4L1006.7 215.4M1006.7 215.4L1006.7 215.4M731.4 233.0L731.4 233.0M731.4 233.0L736.2 249.7M736.2 249.7L744.1 261.4M744.1 261.4L759.0 279.1M759.0 279.1L776.0 287.6M776.0 287.6L797.6 300.3M797.6 300.3L823.0 304.4M823.0 304.4L852.6 311.1M852.6 311.1L884.2 309.0M884.2 309.0L910.5 307.9M910.5 307.9L935.7 299.0M935.7 299.0L958.8 291.1M958.8 291.1L980.9 280.8M980.9 280.8L994.7 265.7M994.7 265.7L1003.3 253.0M1003.3 253.0L1006.3 237.4M1006.3 237.4L1006.3 237.4M1006.3 237.4L1006.3 237.4M731.1 255.8L731.8 263.6M731.8 263.6L735.6 277.9M735.6 277.9L749.3 293.3M749.3 293.3L766.5 304.1M766.5 304.1L785.2 314.7M785.2 314.7L811.3 323.6M811.3 323.6L838.3 327.5M838.3 327.5L868.0 331.2M868.0 331.2L897.4 331.7M897.4 331.7L922.5 327.9M922.5 327.9L950.6 316.6M950.6 316.6L972.2 307.8M972.2 307.8L986.8 298.6M986.8 298.6L1001.2 279.8M1001.2 279.8L1005.0 267.0M1005.0 267.0L1005.8 259.3M1005.8 259.3L1005.8 259.3M1005.8 259.3L1005.8 259.3M730.8 278.6L730.8 278.6M730.8 278.6L734.1 295.8M734.1 295.8L742.6 308.5M742.6 308.5L755.3 322.5M755.3 322.5L775.6 335.6M775.6 335.6L797.0 344.9M797.0 344.9L826.1 348.1M826.1 348.1L852.7 356.0M852.7 356.0L884.0 354.2M884.0 354.2L909.9 348.7M909.9 348.7L934.8 343.2M934.8 343.2L958.9 333.8M958.9 333.8L977.1 325.5M977.1 325.5L991.1 312.8M991.1 312.8L1002.0 296.7M1002.0 296.7L1005.4 281.2M1005.4 281.2L1005.4 281.2M1005.4 281.2L1005.4 281.2M730.5 301.4L731.3 309.2M731.3 309.2L734.8 323.3M734.8 323.3L747.6 338.1M747.6 338.1L765.8 353.7M765.8 353.7L789.2 362.0M789.2 362.0L810.8 372.3M810.8 372.3L841.0 374.6M841.0 374.6L866.4 378.7M866.4 378.7L896.3 375.1M896.3 375.1L922.0 369.6M922.0 369.6L946.0 361.9M946.0 361.9L969.5 354.0M969.5 354.0L985.6 341.5M985.6 341.5L1000.4 328.1M1000.4 328.1L1004.1 310.9M1004.1 310.9L1004.9 303.1M1004.9 303.1L1004.9 303.1M1004.9 303.1L1004.9 303.1M730.3 324.2L730.3 324.2M730.3 324.2L732.5 341.4M732.5 341.4L741.5 352.7M741.5 352.7L758.2 365.8M758.2 365.8L776.0 380.6M776.0 380.6L800.1 389.4M800.1 389.4L823.5 394.0M823.5 394.0L851.6 397.9M851.6 397.9L879.7 398.9M879.7 398.9L908.6 395.1M908.6 395.1L936.0 388.5M936.0 388.5L957.2 380.6M957.2 380.6L977.9 370.3M977.9 370.3L991.8 353.5M991.8 353.5L1001.0 340.9M1001.0 340.9L1004.5 325.1M1004.5 325.1L1004.5 325.1M1004.5 325.1L1004.5 325.1M730.0 347.0L730.8 354.8M730.8 354.8L736.7 370.2M736.7 370.2L748.4 384.5M748.4 384.5L765.2 397.2M765.2 397.2L786.5 407.7M786.5 407.7L811.3 415.5M811.3 415.5L838.5 420.4M838.5 420.4L867.0 422.0M867.0 422.0L895.5 420.4M895.5 420.4L922.7 415.5M922.7 415.5L947.5 407.7M947.5 407.7L968.8 397.2M968.8 397.2L985.6 384.5M985.6 384.5L997.3 370.2M997.3 370.2L1003.2 354.8M1003.2 354.8L1004.0 347.0M1004.0 347.0L1004.0 347.0M1004.0 347.0L1004.0 347.0M733.1 96.2L732.8 119.0M733.1 96.2L732.8 119.0M733.1 96.2L733.3 126.7M735.6 111.5L733.3 126.7M735.6 111.5L740.3 139.6M744.0 126.3L740.3 139.6M744.0 126.3L750.2 155.8M757.9 140.0L750.2 155.8M757.9 140.0L766.6 168.4M776.8 152.0L766.6 168.4M776.8 152.0L787.3 182.3M799.8 161.8L787.3 182.3M799.8 161.8L812.4 190.4M826.0 168.9L812.4 190.4M826.0 168.9L838.9 192.6M854.1 173.1L838.9 192.6M854.1 173.1L870.1 198.0M882.9 174.1L870.1 198.0M882.9 174.1L897.1 198.1M911.2 171.9L897.1 198.1M911.2 171.9L923.0 191.9M937.8 166.6L923.0 191.9M937.8 166.6L950.6 186.9M961.4 158.4L950.6 186.9M961.4 158.4L970.9 173.2M981.1 147.8L970.9 173.2M981.1 147.8L988.0 161.9M996.0 135.1L988.0 161.9M996.0 135.1L1003.0 151.5M1005.4 120.9L1003.0 151.5M1005.4 120.9L1007.5 135.4M1008.9 105.8L1007.5 135.4M1008.9 105.8L1008.5 127.7M1008.9 105.8L1008.5 127.7M1008.9 105.8L1008.5 127.7M1008.9 105.8L1008.5 127.7M1008.9 105.8L1008.5 127.7M732.8 119.0L732.5 141.8M732.8 119.0L732.5 141.8M733.3 126.7L732.5 141.8M733.3 126.7L735.5 156.4M740.3 139.6L735.5 156.4M740.3 139.6L744.7 172.0M750.2 155.8L744.7 172.0M750.2 155.8L755.7 188.0M766.6 168.4L755.7 188.0M766.6 168.4L776.7 199.0M787.3 182.3L776.7 199.0M787.3 182.3L799.3 205.2M812.4 190.4L799.3 205.2M812.4 190.4L826.0 212.1M838.9 192.6L826.0 212.1M838.9 192.6L852.3 219.1M870.1 198.0L852.3 219.1M870.1 198.0L884.5 219.3M897.1 198.1L884.5 219.3M897.1 198.1L909.7 218.7M923.0 191.9L909.7 218.7M923.0 191.9L935.5 211.1M950.6 186.9L935.5 211.1M950.6 186.9L961.0 204.9M970.9 173.2L961.0 204.9M970.9 173.2L978.5 191.3M988.0 161.9L978.5 191.3M988.0 161.9L994.9 176.9M1003.0 151.5L994.9 176.9M1003.0 151.5L1003.7 164.3M1007.5 135.4L1003.7 164.3M1007.5 135.4L1008.0 149.7M1008.5 127.7L1008.0 149.7M1008.5 127.7L1008.0 149.7M1008.5 127.7L1008.0 149.7M1008.5 127.7L1008.0 149.7M1008.5 127.7L1008.0 149.7M732.5 141.8L732.2 164.6M732.5 141.8L732.2 164.6M732.5 141.8L732.8 172.3M735.5 156.4L732.8 172.3M735.5 156.4L737.3 187.2M744.7 172.0L737.3 187.2M744.7 172.0L748.2 202.5M755.7 188.0L748.2 202.5M755.7 188.0L766.6 215.8M776.7 199.0L766.6 215.8M776.7 199.0L787.4 224.0M799.3 205.2L787.4 224.0M799.3 205.2L813.3 235.4M826.0 212.1L813.3 235.4M826.0 212.1L840.5 240.3M852.3 219.1L840.5 240.3M852.3 219.1L868.9 241.0M884.5 219.3L868.9 241.0M884.5 219.3L895.5 238.4M909.7 218.7L895.5 238.4M909.7 218.7L924.0 235.9M935.5 211.1L924.0 235.9M935.5 211.1L950.1 229.9M961.0 204.9L950.1 229.9M961.0 204.9L969.7 220.5M978.5 191.3L969.7 220.5M978.5 191.3L987.0 209.4M994.9 176.9L987.0 209.4M994.9 176.9L1001.2 195.7M1003.7 164.3L1001.2 195.7M1003.7 164.3L1006.6 179.3M1008.0 149.7L1006.6 179.3M1008.0 149.7L1007.6 171.6M1008.0 149.7L1007.6 171.6M1008.0 149.7L1007.6 171.6M1008.0 149.7L1007.6 171.6M1008.0 149.7L1007.6 171.6M732.2 164.6L731.9 187.4M732.2 164.6L731.9 187.4M732.8 172.3L731.9 187.4M732.8 172.3L734.2 201.0M737.3 187.2L734.2 201.0M737.3 187.2L745.2 218.6M748.2 202.5L745.2 218.6M748.2 202.5L759.6 230.0M766.6 215.8L759.6 230.0M766.6 215.8L776.1 242.5M787.4 224.0L776.1 242.5M787.4 224.0L801.5 254.0M813.3 235.4L801.5 254.0M813.3 235.4L825.5 261.1M840.5 240.3L825.5 261.1M840.5 240.3L852.0 261.6M868.9 241.0L852.0 261.6M868.9 241.0L882.4 265.1M895.5 238.4L882.4 265.1M895.5 238.4L910.2 259.0M924.0 235.9L910.2 259.0M924.0 235.9L938.1 257.6M950.1 229.9L938.1 257.6M950.1 229.9L958.1 248.0M969.7 220.5L958.1 248.0M969.7 220.5L981.2 236.7M987.0 209.4L981.2 236.7M987.0 209.4L995.8 224.8M1001.2 195.7L995.8 224.8M1001.2 195.7L1005.6 208.2M1006.6 179.3L1005.6 208.2M1006.6 179.3L1007.1 193.5M1007.6 171.6L1007.1 193.5M1007.6 171.6L1007.1 193.5M1007.6 171.6L1007.1 193.5M1007.6 171.6L1007.1 193.5M1007.6 171.6L1007.1 193.5M731.9 187.4L731.7 210.2M731.9 187.4L731.7 210.2M731.9 187.4L732.3 217.9M734.2 201.0L732.3 217.9M734.2 201.0L738.3 233.8M745.2 218.6L738.3 233.8M745.2 218.6L750.1 246.3M759.6 230.0L750.1 246.3M759.6 230.0L764.3 261.6M776.1 242.5L764.3 261.6M776.1 242.5L786.4 269.9M801.5 254.0L786.4 269.9M801.5 254.0L810.5 277.0M825.5 261.1L810.5 277.0M825.5 261.1L837.6 285.8M852.0 261.6L837.6 285.8M852.0 261.6L865.9 287.1M882.4 265.1L865.9 287.1M882.4 265.1L894.0 283.9M910.2 259.0L894.0 283.9M910.2 259.0L926.3 280.5M938.1 257.6L926.3 280.5M938.1 257.6L951.1 271.7M958.1 248.0L951.1 271.7M958.1 248.0L971.3 265.0M981.2 236.7L971.3 265.0M981.2 236.7L985.4 253.6M995.8 224.8L985.4 253.6M995.8 224.8L998.4 239.6M1005.6 208.2L998.4 239.6M1005.6 208.2L1005.8 223.1M1007.1 193.5L1005.8 223.1M1007.1 193.5L1006.7 215.4M1007.1 193.5L1006.7 215.4M1007.1 193.5L1006.7 215.4M1007.1 193.5L1006.7 215.4M1007.1 193.5L1006.7 215.4M731.7 210.2L731.4 233.0M731.7 210.2L731.4 233.0M732.3 217.9L731.4 233.0M732.3 217.9L736.2 249.7M738.3 233.8L736.2 249.7M738.3 233.8L744.1 261.4M750.1 246.3L744.1 261.4M750.1 246.3L759.0 279.1M764.3 261.6L759.0 279.1M764.3 261.6L776.0 287.6M786.4 269.9L776.0 287.6M786.4 269.9L797.6 300.3M810.5 277.0L797.6 300.3M810.5 277.0L823.0 304.4M837.6 285.8L823.0 304.4M837.6 285.8L852.6 311.1M865.9 287.1L852.6 311.1M865.9 287.1L884.2 309.0M894.0 283.9L884.2 309.0M894.0 283.9L910.5 307.9M926.3 280.5L910.5 307.9M926.3 280.5L935.7 299.0M951.1 271.7L935.7 299.0M951.1 271.7L958.8 291.1M971.3 265.0L958.8 291.1M971.3 265.0L980.9 280.8M985.4 253.6L980.9 280.8M985.4 253.6L994.7 265.7M998.4 239.6L994.7 265.7M998.4 239.6L1003.3 253.0M1005.8 223.1L1003.3 253.0M1005.8 223.1L1006.3 237.4M1006.7 215.4L1006.3 237.4M1006.7 215.4L1006.3 237.4M1006.7 215.4L1006.3 237.4M1006.7 215.4L1006.3 237.4M1006.7 215.4L1006.3 237.4M731.4 233.0L731.1 255.8M731.4 233.0L731.1 255.8M731.4 233.0L731.8 263.6M736.2 249.7L731.8 263.6M736.2 249.7L735.6 277.9M744.1 261.4L735.6 277.9M744.1 261.4L749.3 293.3M759.0 279.1L749.3 293.3M759.0 279.1L766.5 304.1M776.0 287.6L766.5 304.1M776.0 287.6L785.2 314.7M797.6 300.3L785.2 314.7M797.6 300.3L811.3 323.6M823.0 304.4L811.3 323.6M823.0 304.4L838.3 327.5M852.6 311.1L838.3 327.5M852.6 311.1L868.0 331.2M884.2 309.0L868.0 331.2M884.2 309.0L897.4 331.7M910.5 307.9L897.4 331.7M910.5 307.9L922.5 327.9M935.7 299.0L922.5 327.9M935.7 299.0L950.6 316.6M958.8 291.1L950.6 316.6M958.8 291.1L972.2 307.8M980.9 280.8L972.2 307.8M980.9 280.8L986.8 298.6M994.7 265.7L986.8 298.6M994.7 265.7L1001.2 279.8M1003.3 253.0L1001.2 279.8M1003.3 253.0L1005.0 267.0M1006.3 237.4L1005.0 267.0M1006.3 237.4L1005.8 259.3M1006.3 237.4L1005.8 259.3M1006.3 237.4L1005.8 259.3M1006.3 237.4L1005.8 259.3M1006.3 237.4L1005.8 259.3M731.1 255.8L730.8 278.6M731.1 255.8L730.8 278.6M731.8 263.6L730.8 278.6M731.8 263.6L734.1 295.8M735.6 277.9L734.1 295.8M735.6 277.9L742.6 308.5M749.3 293.3L742.6 308.5M749.3 293.3L755.3 322.5M766.5 304.1L755.3 322.5M766.5 304.1L775.6 335.6M785.2 314.7L775.6 335.6M785.2 314.7L797.0 344.9M811.3 323.6L797.0 344.9M811.3 323.6L826.1 348.1M838.3 327.5L826.1 348.1M838.3 327.5L852.7 356.0M868.0 331.2L852.7 356.0M868.0 331.2L884.0 354.2M897.4 331.7L884.0 354.2M897.4 331.7L909.9 348.7M922.5 327.9L909.9 348.7M922.5 327.9L934.8 343.2M950.6 316.6L934.8 343.2M950.6 316.6L958.9 333.8M972.2 307.8L958.9 333.8M972.2 307.8L977.1 325.5M986.8 298.6L977.1 325.5M986.8 298.6L991.1 312.8M1001.2 279.8L991.1 312.8M1001.2 279.8L1002.0 296.7M1005.0 267.0L1002.0 296.7M1005.0 267.0L1005.4 281.2M1005.8 259.3L1005.4 281.2M1005.8 259.3L1005.4 281.2M1005.8 259.3L1005.4 281.2M1005.8 259.3L1005.4 281.2M1005.8 259.3L1005.4 281.2M730.8 278.6L730.5 301.4M730.8 278.6L730.5 301.4M730.8 278.6L731.3 309.2M734.1 295.8L731.3 309.2M734.1 295.8L734.8 323.3M742.6 308.5L734.8 323.3M742.6 308.5L747.6 338.1M755.3 322.5L747.6 338.1M755.3 322.5L765.8 353.7M775.6 335.6L765.8 353.7M775.6 335.6L789.2 362.0M797.0 344.9L789.2 362.0M797.0 344.9L810.8 372.3M826.1 348.1L810.8 372.3M826.1 348.1L841.0 374.6M852.7 356.0L841.0 374.6M852.7 356.0L866.4 378.7M884.0 354.2L866.4 378.7M884.0 354.2L896.3 375.1M909.9 348.7L896.3 375.1M909.9 348.7L922.0 369.6M934.8 343.2L922.0 369.6M934.8 343.2L946.0 361.9M958.9 333.8L946.0 361.9M958.9 333.8L969.5 354.0M977.1 325.5L969.5 354.0M977.1 325.5L985.6 341.5M991.1 312.8L985.6 341.5M991.1 312.8L1000.4 328.1M1002.0 296.7L1000.4 328.1M1002.0 296.7L1004.1 310.9M1005.4 281.2L1004.1 310.9M1005.4 281.2L1004.9 303.1M1005.4 281.2L1004.9 303.1M1005.4 281.2L1004.9 303.1M1005.4 281.2L1004.9 303.1M1005.4 281.2L1004.9 303.1M730.5 301.4L730.3 324.2M730.5 301.4L730.3 324.2M731.3 309.2L730.3 324.2M731.3 309.2L732.5 341.4M734.8 323.3L732.5 341.4M734.8 323.3L741.5 352.7M747.6 338.1L741.5 352.7M747.6 338.1L758.2 365.8M765.8 353.7L758.2 365.8M765.8 353.7L776.0 380.6M789.2 362.0L776.0 380.6M789.2 362.0L800.1 389.4M810.8 372.3L800.1 389.4M810.8 372.3L823.5 394.0M841.0 374.6L823.5 394.0M841.0 374.6L851.6 397.9M866.4 378.7L851.6 397.9M866.4 378.7L879.7 398.9M896.3 375.1L879.7 398.9M896.3 375.1L908.6 395.1M922.0 369.6L908.6 395.1M922.0 369.6L936.0 388.5M946.0 361.9L936.0 388.5M946.0 361.9L957.2 380.6M969.5 354.0L957.2 380.6M969.5 354.0L977.9 370.3M985.6 341.5L977.9 370.3M985.6 341.5L991.8 353.5M1000.4 328.1L991.8 353.5M1000.4 328.1L1001.0 340.9M1004.1 310.9L1001.0 340.9M1004.1 310.9L1004.5 325.1M1004.9 303.1L1004.5 325.1M1004.9 303.1L1004.5 325.1M1004.9 303.1L1004.5 325.1M1004.9 303.1L1004.5 325.1M1004.9 303.1L1004.5 325.1M730.3 324.2L730.0 347.0M730.3 324.2L730.0 347.0M730.3 324.2L730.8 354.8M732.5 341.4L730.8 354.8M732.5 341.4L736.7 370.2M741.5 352.7L736.7 370.2M741.5 352.7L748.4 384.5M758.2 365.8L748.4 384.5M758.2 365.8L765.2 397.2M776.0 380.6L765.2 397.2M776.0 380.6L786.5 407.7M800.1 389.4L786.5 407.7M800.1 389.4L811.3 415.5M823.5 394.0L811.3 415.5M823.5 394.0L838.5 420.4M851.6 397.9L838.5 420.4M851.6 397.9L867.0 422.0M879.7 398.9L867.0 422.0M879.7 398.9L895.5 420.4M908.6 395.1L895.5 420.4M908.6 395.1L922.7 415.5M936.0 388.5L922.7 415.5M936.0 388.5L947.5 407.7M957.2 380.6L947.5 407.7M957.2 380.6L968.8 397.2M977.9 370.3L968.8 397.2M977.9 370.3L985.6 384.5M991.8 353.5L985.6 384.5M991.8 353.5L997.3 370.2M1001.0 340.9L997.3 370.2M1001.0 340.9L1003.2 354.8M1004.5 325.1L1003.2 354.8M1004.5 325.1L1004.0 347.0M1004.5 325.1L1004.0 347.0M1004.5 325.1L1004.0 347.0M1004.5 325.1L1004.0 347.0M1004.5 325.1L1004.0 347.0"/><path fill="none" stroke="#000" stroke-width="0.85" stroke-opacity="0.9" d="M869.2 175.4L898.6 174.8M898.6 174.8L926.6 170.6M926.6 170.6L951.9 162.9M951.9 162.9L973.3 152.2M973.3 152.2L989.5 139.0M989.5 139.0L999.9 124.0M999.9 124.0L1003.9 107.8M1003.9 107.8L1001.3 91.4M1001.3 91.4L992.2 75.5M992.2 75.5L977.1 61.0M977.1 61.0L956.7 48.6M956.7 48.6L932.2 38.8M932.2 38.8L904.6 32.2M904.6 32.2L875.4 29.2M875.4 29.2L846.0 29.8M846.0 29.8L818.0 34.0M818.0 34.0L792.7 41.7M792.7 41.7L771.3 52.4M771.3 52.4L755.1 65.6M755.1 65.6L744.7 80.6M744.7 80.6L740.7 96.8M740.7 96.8L743.3 113.2M743.3 113.2L752.4 129.1M752.4 129.1L767.5 143.6M767.5 143.6L787.9 156.0M787.9 156.0L812.4 165.8M812.4 165.8L840.0 172.4M840.0 172.4L869.2 175.4M881.0 163.8L904.0 164.0M904.0 164.0L927.6 157.0M927.6 157.0L945.4 151.0M945.4 151.0L960.6 141.5M960.6 141.5L970.7 131.8M970.7 131.8L976.5 119.3M976.5 119.3L976.1 103.0M976.1 103.0L972.6 90.5M972.6 90.5L961.8 77.9M961.8 77.9L945.9 69.1M945.9 69.1L930.3 58.7M930.3 58.7L908.9 51.6M908.9 51.6L885.9 47.5M885.9 47.5L862.9 50.3M862.9 50.3L838.1 51.6M838.1 51.6L816.5 53.9M816.5 53.9L801.3 61.5M801.3 61.5L785.6 73.5M785.6 73.5L771.8 85.1M771.8 85.1L769.2 93.9M769.2 93.9L766.9 108.0M766.9 108.0L774.0 121.2M774.0 121.2L781.3 135.0M781.3 135.0L797.2 146.6M797.2 146.6L815.0 155.3M815.0 155.3L834.0 159.8M834.0 159.8L858.8 165.6M858.8 165.6L881.0 163.8M869.6 154.4L887.1 154.0M887.1 154.0L903.7 151.5M903.7 151.5L918.8 146.9M918.8 146.9L931.5 140.6M931.5 140.6L941.2 132.8M941.2 132.8L947.4 123.8M947.4 123.8L949.7 114.3M949.7 114.3L948.2 104.6M948.2 104.6L942.8 95.1M942.8 95.1L933.8 86.5M933.8 86.5L921.7 79.1M921.7 79.1L907.0 73.4M907.0 73.4L890.6 69.5M890.6 69.5L873.2 67.6M873.2 67.6L855.7 68.0M855.7 68.0L839.1 70.5M839.1 70.5L824.0 75.1M824.0 75.1L811.3 81.4M811.3 81.4L801.6 89.2M801.6 89.2L795.4 98.2M795.4 98.2L793.1 107.7M793.1 107.7L794.6 117.4M794.6 117.4L800.0 126.9M800.0 126.9L809.0 135.5M809.0 135.5L821.1 142.9M821.1 142.9L835.8 148.6M835.8 148.6L852.2 152.5M852.2 152.5L869.6 154.4M869.2 175.4L881.0 163.8M869.2 175.4L858.8 165.6M898.6 174.8L904.0 164.0M898.6 174.8L881.0 163.8M926.6 170.6L927.6 157.0M926.6 170.6L904.0 164.0M951.9 162.9L945.4 151.0M951.9 162.9L927.6 157.0M973.3 152.2L960.6 141.5M973.3 152.2L945.4 151.0M989.5 139.0L970.7 131.8M989.5 139.0L960.6 141.5M999.9 124.0L976.5 119.3M999.9 124.0L970.7 131.8M1003.9 107.8L976.1 103.0M1003.9 107.8L976.5 119.3M1001.3 91.4L972.6 90.5M1001.3 91.4L976.1 103.0M992.2 75.5L961.8 77.9M992.2 75.5L972.6 90.5M977.1 61.0L945.9 69.1M977.1 61.0L961.8 77.9M956.7 48.6L930.3 58.7M956.7 48.6L945.9 69.1M932.2 38.8L908.9 51.6M932.2 38.8L930.3 58.7M904.6 32.2L885.9 47.5M904.6 32.2L908.9 51.6M875.4 29.2L862.9 50.3M875.4 29.2L885.9 47.5M846.0 29.8L838.1 51.6M846.0 29.8L862.9 50.3M818.0 34.0L816.5 53.9M818.0 34.0L838.1 51.6M792.7 41.7L801.3 61.5M792.7 41.7L816.5 53.9M771.3 52.4L785.6 73.5M771.3 52.4L801.3 61.5M755.1 65.6L771.8 85.1M755.1 65.6L785.6 73.5M744.7 80.6L769.2 93.9M744.7 80.6L771.8 85.1M740.7 96.8L766.9 108.0M740.7 96.8L769.2 93.9M743.3 113.2L774.0 121.2M743.3 113.2L766.9 108.0M752.4 129.1L781.3 135.0M752.4 129.1L774.0 121.2M767.5 143.6L797.2 146.6M767.5 143.6L781.3 135.0M787.9 156.0L815.0 155.3M787.9 156.0L797.2 146.6M812.4 165.8L834.0 159.8M812.4 165.8L815.0 155.3M840.0 172.4L858.8 165.6M840.0 172.4L834.0 159.8M881.0 163.8L869.6 154.4M881.0 163.8L887.1 154.0M904.0 164.0L887.1 154.0M904.0 164.0L903.7 151.5M927.6 157.0L903.7 151.5M927.6 157.0L918.8 146.9M945.4 151.0L918.8 146.9M945.4 151.0L931.5 140.6M960.6 141.5L931.5 140.6M960.6 141.5L941.2 132.8M970.7 131.8L941.2 132.8M970.7 131.8L947.4 123.8M976.5 119.3L947.4 123.8M976.5 119.3L949.7 114.3M976.1 103.0L949.7 114.3M976.1 103.0L948.2 104.6M972.6 90.5L948.2 104.6M972.6 90.5L942.8 95.1M961.8 77.9L942.8 95.1M961.8 77.9L933.8 86.5M945.9 69.1L933.8 86.5M945.9 69.1L921.7 79.1M930.3 58.7L921.7 79.1M930.3 58.7L907.0 73.4M908.9 51.6L907.0 73.4M908.9 51.6L890.6 69.5M885.9 47.5L890.6 69.5M885.9 47.5L873.2 67.6M862.9 50.3L873.2 67.6M862.9 50.3L855.7 68.0M838.1 51.6L855.7 68.0M838.1 51.6L839.1 70.5M816.5 53.9L839.1 70.5M816.5 53.9L824.0 75.1M801.3 61.5L824.0 75.1M801.3 61.5L811.3 81.4M785.6 73.5L811.3 81.4M785.6 73.5L801.6 89.2M771.8 85.1L801.6 89.2M771.8 85.1L795.4 98.2M769.2 93.9L795.4 98.2M769.2 93.9L793.1 107.7M766.9 108.0L793.1 107.7M766.9 108.0L794.6 117.4M774.0 121.2L794.6 117.4M774.0 121.2L800.0 126.9M781.3 135.0L800.0 126.9M781.3 135.0L809.0 135.5M797.2 146.6L809.0 135.5M797.2 146.6L821.1 142.9M815.0 155.3L821.1 142.9M815.0 155.3L835.8 148.6M834.0 159.8L835.8 148.6M834.0 159.8L852.2 152.5M858.8 165.6L852.2 152.5M858.8 165.6L869.6 154.4"/><path clip-path="url(#hc)" fill="none" stroke="#000" stroke-width="0.85" stroke-opacity="0.9" d="M949.7 136.3L949.6 132.9M949.6 132.9L949.1 129.5M949.1 129.5L948.0 126.1M948.0 126.1L946.5 122.7M946.5 122.7L944.5 119.4M944.5 119.4L942.0 116.2M942.0 116.2L939.1 113.1M939.1 113.1L935.8 110.2M935.8 110.2L932.1 107.3M932.1 107.3L928.1 104.7M928.1 104.7L923.7 102.2M923.7 102.2L918.9 99.8M918.9 99.8L913.9 97.7M913.9 97.7L908.6 95.9M908.6 95.9L903.1 94.2M903.1 94.2L897.3 92.8M897.3 92.8L891.5 91.6M891.5 91.6L885.4 90.7M885.4 90.7L879.4 90.0M879.4 90.0L873.2 89.6M873.2 89.6L867.1 89.5M867.1 89.5L860.9 89.7M860.9 89.7L854.9 90.1M854.9 90.1L848.9 90.7M848.9 90.7L843.1 91.7M843.1 91.7L837.5 92.9M837.5 92.9L832.0 94.3M832.0 94.3L826.8 96.0M826.8 96.0L821.9 97.9M821.9 97.9L817.3 100.0M817.3 100.0L813.0 102.3M813.0 102.3L809.1 104.9M809.1 104.9L805.6 107.5M805.6 107.5L802.4 110.4M802.4 110.4L799.7 113.4M799.7 113.4L797.5 116.5M797.5 116.5L795.7 119.7M795.7 119.7L794.3 123.0M794.3 123.0L793.5 126.3M793.5 126.3L793.1 129.7M949.7 158.3L949.6 154.9M949.6 154.9L949.1 151.5M949.1 151.5L948.0 148.1M948.0 148.1L946.5 144.7M946.5 144.7L944.5 141.4M944.5 141.4L942.0 138.2M942.0 138.2L939.1 135.1M939.1 135.1L935.8 132.2M935.8 132.2L932.1 129.3M932.1 129.3L928.1 126.7M928.1 126.7L923.7 124.2M923.7 124.2L918.9 121.8M918.9 121.8L913.9 119.7M913.9 119.7L908.6 117.9M908.6 117.9L903.1 116.2M903.1 116.2L897.3 114.8M897.3 114.8L891.5 113.6M891.5 113.6L885.4 112.7M885.4 112.7L879.4 112.0M879.4 112.0L873.2 111.6M873.2 111.6L867.1 111.5M867.1 111.5L860.9 111.7M860.9 111.7L854.9 112.1M854.9 112.1L848.9 112.7M848.9 112.7L843.1 113.7M843.1 113.7L837.5 114.9M837.5 114.9L832.0 116.3M832.0 116.3L826.8 118.0M826.8 118.0L821.9 119.9M821.9 119.9L817.3 122.0M817.3 122.0L813.0 124.3M813.0 124.3L809.1 126.9M809.1 126.9L805.6 129.5M805.6 129.5L802.4 132.4M802.4 132.4L799.7 135.4M799.7 135.4L797.5 138.5M797.5 138.5L795.7 141.7M795.7 141.7L794.3 145.0M794.3 145.0L793.5 148.3M793.5 148.3L793.1 151.7M949.7 180.3L949.6 176.9M949.6 176.9L949.1 173.5M949.1 173.5L948.0 170.1M948.0 170.1L946.5 166.7M946.5 166.7L944.5 163.4M944.5 163.4L942.0 160.2M942.0 160.2L939.1 157.1M939.1 157.1L935.8 154.2M935.8 154.2L932.1 151.3M932.1 151.3L928.1 148.7M928.1 148.7L923.7 146.2M923.7 146.2L918.9 143.8M918.9 143.8L913.9 141.7M913.9 141.7L908.6 139.9M908.6 139.9L903.1 138.2M903.1 138.2L897.3 136.8M897.3 136.8L891.5 135.6M891.5 135.6L885.4 134.7M885.4 134.7L879.4 134.0M879.4 134.0L873.2 133.6M873.2 133.6L867.1 133.5M867.1 133.5L860.9 133.7M860.9 133.7L854.9 134.1M854.9 134.1L848.9 134.7M848.9 134.7L843.1 135.7M843.1 135.7L837.5 136.9M837.5 136.9L832.0 138.3M832.0 138.3L826.8 140.0M826.8 140.0L821.9 141.9M821.9 141.9L817.3 144.0M817.3 144.0L813.0 146.3M813.0 146.3L809.1 148.9M809.1 148.9L805.6 151.5M805.6 151.5L802.4 154.4M802.4 154.4L799.7 157.4M799.7 157.4L797.5 160.5M797.5 160.5L795.7 163.7M795.7 163.7L794.3 167.0M794.3 167.0L793.5 170.3M793.5 170.3L793.1 173.7M948.9 106.7L948.9 128.7M948.9 106.7L938.8 112.8M948.9 128.7L948.9 150.7M948.9 128.7L938.8 134.8M948.9 150.7L948.9 172.7M948.9 150.7L938.8 156.8M948.9 172.7L948.9 194.7M948.9 172.7L938.8 178.8M938.8 90.8L938.8 112.8M938.8 90.8L920.0 100.3M938.8 112.8L938.8 134.8M938.8 112.8L920.0 122.3M938.8 134.8L938.8 156.8M938.8 134.8L920.0 144.3M938.8 156.8L938.8 178.8M938.8 156.8L920.0 166.3M920.0 78.3L920.0 100.3M920.0 78.3L896.0 92.5M920.0 100.3L920.0 122.3M920.0 100.3L896.0 114.5M920.0 122.3L920.0 144.3M920.0 122.3L896.0 136.5M920.0 144.3L920.0 166.3M920.0 144.3L896.0 158.5M896.0 70.5L896.0 92.5M896.0 70.5L873.2 89.6M896.0 92.5L896.0 114.5M896.0 92.5L873.2 111.6M896.0 114.5L896.0 136.5M896.0 114.5L873.2 133.6M896.0 136.5L896.0 158.5M896.0 136.5L873.2 155.6M873.2 67.6L873.2 89.6M873.2 67.6L850.2 90.6M873.2 89.6L873.2 111.6M873.2 89.6L850.2 112.6M873.2 111.6L873.2 133.6M873.2 111.6L850.2 134.6M873.2 133.6L873.2 155.6M873.2 133.6L850.2 156.6M850.2 68.6L850.2 90.6M850.2 68.6L825.7 96.4M850.2 90.6L850.2 112.6M850.2 90.6L825.7 118.4M850.2 112.6L850.2 134.6M850.2 112.6L825.7 140.4M850.2 134.6L850.2 156.6M850.2 134.6L825.7 162.4M825.7 74.4L825.7 96.4M825.7 74.4L805.9 107.2M825.7 96.4L825.7 118.4M825.7 96.4L805.9 129.2M825.7 118.4L825.7 140.4M825.7 118.4L805.9 151.2M825.7 140.4L825.7 162.4M825.7 140.4L805.9 173.2M805.9 85.2L805.9 107.2M805.9 85.2L794.6 122.2M805.9 107.2L805.9 129.2M805.9 107.2L794.6 144.2M805.9 129.2L805.9 151.2M805.9 129.2L794.6 166.2M805.9 151.2L805.9 173.2M805.9 151.2L794.6 188.2M794.6 100.2L794.6 122.2M794.6 122.2L794.6 144.2M794.6 144.2L794.6 166.2M794.6 166.2L794.6 188.2"/><ellipse cx="872.3" cy="102.3" rx="131.7" ry="73.2" fill="none" stroke="#000" stroke-width="1.6" transform="rotate(2.4 872.3 102.3)"/><ellipse cx="871.4" cy="111" rx="78.4" ry="43.4" fill="none" stroke="#000" stroke-width="1.8" transform="rotate(2.4 871.4 111)"/><polygon points="746.0,78.0 737.5,100.0 732.8,121.3 732.6,133.8 732.5,146.4 732.3,158.9 732.1,171.4 732.0,184.0 731.8,196.5 731.7,209.1 731.5,221.6 731.4,234.1 731.2,246.7 731.1,259.2 730.9,271.8 730.8,284.3 730.6,296.8 730.5,309.4 730.3,321.9 730.2,334.5 730.0,347.0 730.0,347.0 730.2,350.9 730.8,354.8 731.7,358.7 733.0,362.6 734.7,366.4 736.7,370.2 739.1,373.9 741.8,377.5 744.9,381.0 748.4,384.5 752.1,387.8 756.2,391.1 760.5,394.2 765.2,397.2 770.1,400.0 775.3,402.7 780.8,405.3 786.5,407.7 792.4,409.9 798.5,412.0 804.8,413.8 811.3,415.5 817.9,417.0 824.7,418.3 831.5,419.4 838.5,420.4 845.6,421.1 852.7,421.6 859.8,421.9 867.0,422.0 874.2,421.9 881.3,421.6 888.4,421.1 895.5,420.4 902.5,419.4 909.3,418.3 916.1,417.0 922.7,415.5 929.2,413.8 935.5,412.0 941.6,409.9 947.5,407.7 953.2,405.3 958.7,402.7 963.9,400.0 968.8,397.2 973.5,394.2 977.8,391.1 981.9,387.8 985.6,384.5 989.1,381.0 992.2,377.5 994.9,373.9 997.3,370.2 999.3,366.4 1001.0,362.6 1002.3,358.7 1003.2,354.8 1003.8,350.9 1004.0,347.0 1004.0,347.0 1004.2,334.9 1004.5,322.9 1004.7,310.8 1005.0,298.8 1005.2,286.7 1005.5,274.6 1005.7,262.6 1006.0,250.5 1006.2,238.5 1006.5,226.4 1006.7,214.3 1007.0,202.3 1007.2,190.2 1007.5,178.2 1007.7,166.1 1007.9,154.0 1008.2,142.0 1008.4,129.9 1008.8,118.0 1006.0,104.0 1002.4,95.0 1001.4,91.7 1000.1,88.5 998.6,85.3 996.8,82.1 994.7,78.9 992.4,75.8 989.8,72.7 987.0,69.7 984.0,66.8 980.8,64.0 977.3,61.2 973.6,58.5 969.7,55.9 965.6,53.4 961.4,50.9 956.9,48.6 952.3,46.4 947.5,44.4 942.5,42.4 937.4,40.5 932.2,38.8 926.9,37.2 921.4,35.8 915.9,34.4 910.2,33.3 904.5,32.2 898.7,31.3 892.9,30.6 887.0,29.9 881.1,29.5 875.2,29.2 869.2,29.0 863.3,29.0 857.4,29.1 851.5,29.4 845.7,29.8 839.9,30.4 834.2,31.1 828.5,32.0 823.0,33.0 817.5,34.1 812.2,35.4 807.0,36.8 801.9,38.4 797.0,40.1 792.2,41.9 787.6,43.8 783.1,45.9 778.8,48.0 774.7,50.3 770.9,52.7 767.2,55.2 763.7,57.8 760.5,60.4 757.5,63.2 754.7,66.0 752.1,68.9 749.8,71.9 747.8,74.9 746.0,78.0" fill="none" stroke="#000" stroke-width="1.4"/><polyline points="734.5,258.0 737.2,260.5 741.0,264.1 745.4,268.3 750.3,272.7 755.4,277.0 760.4,280.8 765.2,284.1 770.1,287.3 775.2,290.4 780.6,293.3 786.4,296.1 792.8,298.6 800.0,300.9 807.8,303.1 816.1,305.1 824.7,306.9 833.2,308.6 841.5,310.0 849.8,311.2 858.5,312.3 867.1,313.1 875.4,313.8 883.1,314.3 890.0,314.8 896.1,315.1 901.8,315.2 906.8,315.2 911.2,315.1 914.8,315.0 917.6,315.0" fill="none" stroke="#000" stroke-width="1.6" stroke-linejoin="round"/><polyline points="917.6,315.0 917.6,377.0" fill="none" stroke="#000" stroke-width="1.6" stroke-linejoin="round"/><polyline points="734.5,319.5 917.6,376.5" fill="none" stroke="#000" stroke-width="1.6" stroke-linejoin="round"/><polyline points="730.0,309.5 730.3,314.3 731.2,319.1 732.6,323.8 734.6,328.5 737.1,333.1 740.2,337.6 743.9,342.0 748.0,346.2 752.7,350.3 757.8,354.2 763.4,357.9 769.5,361.5 775.9,364.8 782.7,367.8 789.9,370.7 797.4,373.2 805.2,375.5 813.2,377.6 821.5,379.3 830.0,380.8 838.6,381.9 847.4,382.7 856.2,383.3 865.1,383.5 874.0,383.4 882.8,383.0 891.6,382.3 900.3,381.3 908.8,380.0 917.2,378.4" fill="none" stroke="#000" stroke-width="1.6" stroke-linejoin="round"/><path fill="none" stroke="#000" stroke-width="0.85" stroke-opacity="0.9" d="M758.8 279.6L758.8 327.1M779.9 293.0L779.9 333.6M802.6 301.7L802.6 340.7M825.2 307.0L825.2 347.7M848.0 311.0L848.0 354.8M870.6 313.4L870.6 361.9M893.3 315.0L893.3 368.9M734.5 302.0L758.8 307.6M734.5 258.0L758.8 307.6M734.5 302.0L758.8 327.1M758.8 307.6L779.9 312.4M758.8 279.6L779.9 312.4M758.8 307.6L779.9 333.6M779.9 312.4L802.6 317.6M779.9 293.0L802.6 317.6M779.9 312.4L802.6 340.7M802.6 317.6L825.2 322.8M802.6 301.7L825.2 322.8M802.6 317.6L825.2 347.7M825.2 322.8L848.0 328.0M825.2 307.0L848.0 328.0M825.2 322.8L848.0 354.8M848.0 328.0L870.6 333.2M848.0 311.0L870.6 333.2M848.0 328.0L870.6 361.9M870.6 333.2L893.3 338.4M870.6 313.4L893.3 338.4M870.6 333.2L893.3 368.9M893.3 338.4L917.6 344.0M893.3 315.0L917.6 344.0M893.3 338.4L917.6 376.5"/><line x1="694.7" y1="36" x2="750.748411042797" y2="60.40677308239994" stroke="#1a1a1a" stroke-width="1.5"/><polygon points="759.0,64.0 749.4,63.6 752.1,57.2" fill="#1a1a1a"/><circle cx="765" cy="67.3" r="4.2" fill="#ff0000"/><line x1="1027" y1="111.5" x2="1004.0850524817608" y2="129.45004222262062" stroke="#1a1a1a" stroke-width="1.5"/><polygon points="997.0,135.0 1001.9,126.7 1006.2,132.2" fill="#1a1a1a"/><circle cx="990.2" cy="142" r="4.2" fill="#ff0000"/><line x1="969.2" y1="212.4" x2="919.0974834308458" y2="251.46594823399084" stroke="#1a1a1a" stroke-width="1.5"/><polygon points="912.0,257.0 916.9,248.7 921.2,254.2" fill="#1a1a1a"/><circle cx="906.7" cy="262.2" r="4.2" fill="#ff0000"/><line x1="842" y1="315" x2="819.1424572516272" y2="332.5241161070858" stroke="#1a1a1a" stroke-width="1.5"/><polygon points="812.0,338.0 817.0,329.7 821.3,335.3" fill="#1a1a1a"/><circle cx="810.4" cy="341.7" r="4.2" fill="#ff0000"/><rect x="559.5" y="15.5" width="135" height="21" fill="#f4f4f4" stroke="#505050" stroke-width="1"/><text x="690" y="29.5" text-anchor="end" font-family="Liberation Sans" font-weight="bold" font-size="11.3" fill="#1a1a1a">Result value =284.454</text><rect x="1027.5" y="90.5" width="134" height="21" fill="#f4f4f4" stroke="#505050" stroke-width="1"/><text x="1157" y="104.5" text-anchor="end" font-family="Liberation Sans" font-weight="bold" font-size="11.3" fill="#1a1a1a">Result value =376.621</text><rect x="969.5" y="192.5" width="133" height="20" fill="#f4f4f4" stroke="#505050" stroke-width="1"/><text x="1098" y="205.5" text-anchor="end" font-family="Liberation Sans" font-weight="bold" font-size="11.3" fill="#1a1a1a">Result value =49.1708</text><rect x="847.5" y="290.5" width="134" height="20" fill="#f4f4f4" stroke="#cfcfcf" stroke-width="1"/><text x="977" y="303.5" text-anchor="end" font-family="Liberation Sans" font-weight="bold" font-size="11.3" fill="#1a1a1a">Result value =38.6381</text></svg><!--/FEA-->
</body></html>
